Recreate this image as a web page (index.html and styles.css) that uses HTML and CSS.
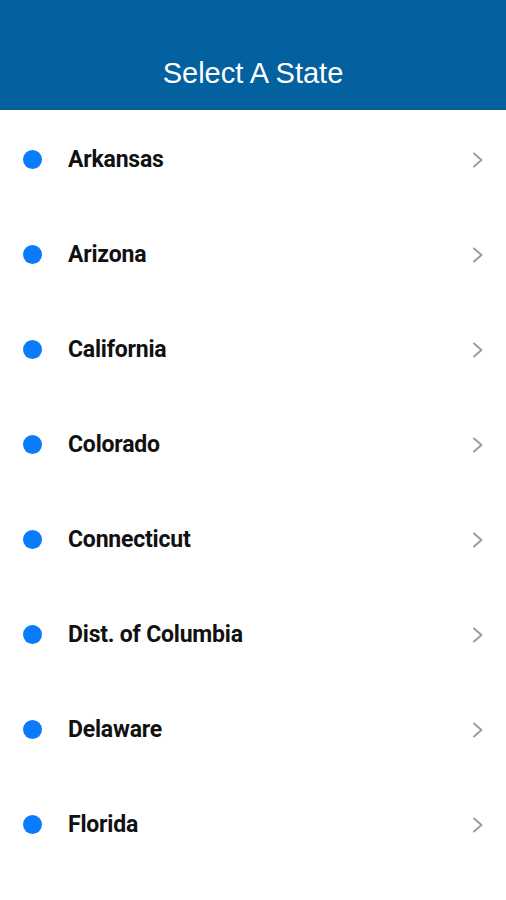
FILE: index.html
```html
<!DOCTYPE html>
<html>
<head>
<meta charset="utf-8">
<link rel="stylesheet" href="styles.css">
</head>
<body>
<header class="header"><h1 class="title">Select A State</h1></header>
<ul class="list">
  <li class="row"><span class="dot"></span><span class="name">Arkansas</span><svg class="chev" viewBox="0 0 12 16"><path d="M2 1.5 L9.5 8 L2 14.5"/></svg></li>
  <li class="row"><span class="dot"></span><span class="name">Arizona</span><svg class="chev" viewBox="0 0 12 16"><path d="M2 1.5 L9.5 8 L2 14.5"/></svg></li>
  <li class="row"><span class="dot"></span><span class="name">California</span><svg class="chev" viewBox="0 0 12 16"><path d="M2 1.5 L9.5 8 L2 14.5"/></svg></li>
  <li class="row"><span class="dot"></span><span class="name">Colorado</span><svg class="chev" viewBox="0 0 12 16"><path d="M2 1.5 L9.5 8 L2 14.5"/></svg></li>
  <li class="row"><span class="dot"></span><span class="name">Connecticut</span><svg class="chev" viewBox="0 0 12 16"><path d="M2 1.5 L9.5 8 L2 14.5"/></svg></li>
  <li class="row"><span class="dot"></span><span class="name">Dist. of Columbia</span><svg class="chev" viewBox="0 0 12 16"><path d="M2 1.5 L9.5 8 L2 14.5"/></svg></li>
  <li class="row"><span class="dot"></span><span class="name">Delaware</span><svg class="chev" viewBox="0 0 12 16"><path d="M2 1.5 L9.5 8 L2 14.5"/></svg></li>
  <li class="row"><span class="dot"></span><span class="name">Florida</span><svg class="chev" viewBox="0 0 12 16"><path d="M2 1.5 L9.5 8 L2 14.5"/></svg></li>
</ul>
</body>
</html>
```
FILE: styles.css
```css
html, body {
  margin: 0;
  padding: 0;
  background: #ffffff;
}
body {
  width: 506px;
  height: 900px;
  overflow: hidden;
}
.header {
  height: 110px;
  background: #03619f;
  display: flex;
  align-items: flex-end;
  justify-content: center;
  box-sizing: border-box;
  padding-bottom: 20px;
}
.title {
  margin: 0;
  font-family: "Liberation Sans", Arial, sans-serif;
  font-weight: normal;
  font-size: 29px;
  line-height: 34px;
  color: #ffffff;
}
.list {
  list-style: none;
  margin: 0;
  padding: 2px 0 0;
}
.row {
  height: 95px;
  display: flex;
  align-items: center;
  padding: 0 22px 0 23px;
}
.dot {
  width: 19px;
  height: 19px;
  border-radius: 50%;
  background: #0a7bfb;
  flex: none;
}
.name {
  margin-left: 26px;
  flex: 1;
  font-family: Roboto, "Liberation Sans", sans-serif;
  font-weight: 700;
  font-size: 23px;
  color: #111111;
  letter-spacing: -0.2px;
}
.chev {
  width: 12px;
  height: 16px;
  flex: none;
}
.chev path {
  fill: none;
  stroke: #9c9c9c;
  stroke-width: 2;
  stroke-linecap: round;
  stroke-linejoin: round;
}
```
